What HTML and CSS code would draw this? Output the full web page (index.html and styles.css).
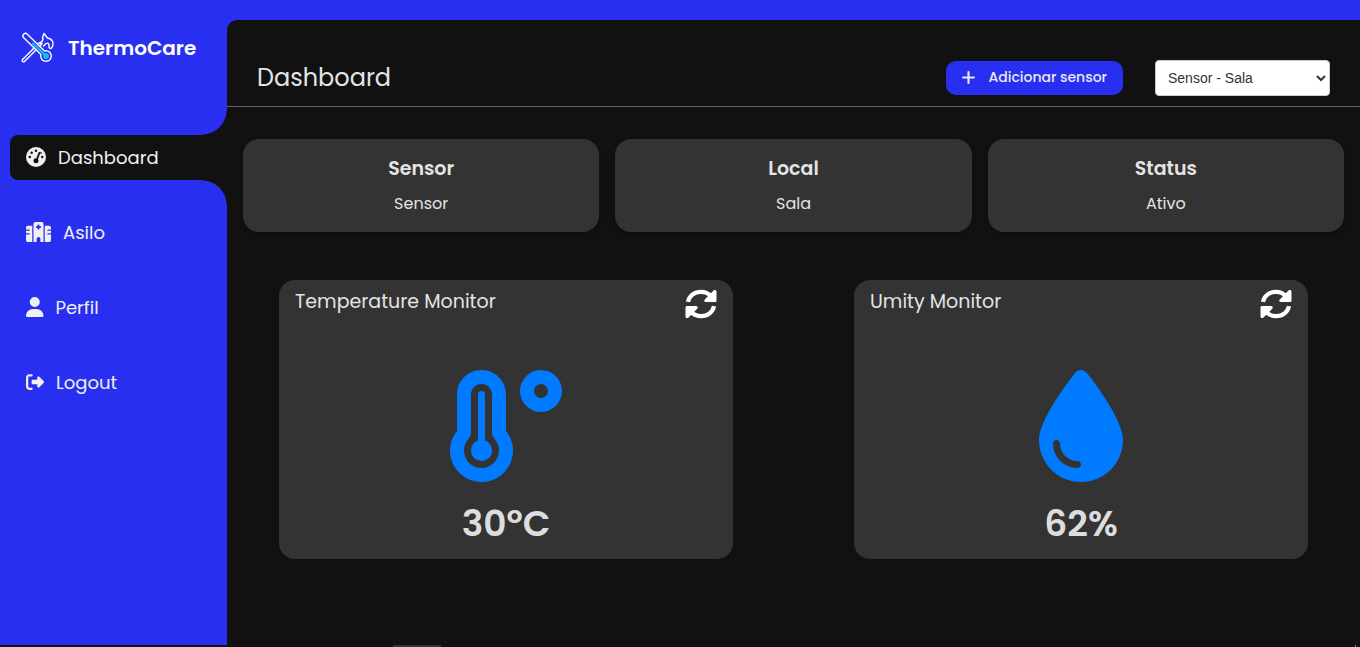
FILE: index.html
```html
<!DOCTYPE html>
<html lang="pt-BR">
<head>
<meta charset="utf-8">
<title>ThermoCare</title>
<link rel="stylesheet" href="styles.css">
</head>
<body>
<div class="layout">
  <aside class="sidebar">
    <a class="brand" href="#">
      <svg class="brand-logo" viewBox="0 0 36 36" fill="none" stroke-linecap="round" stroke-linejoin="round" aria-hidden="true">
        <path d="M3.500 30.500 20.500 13.500" stroke="#fff" stroke-width="4"/>
        <path d="M3.500 30.500 20.500 13.500" stroke="#292ff0" stroke-width="1.300"/>
        <path d="M20 14C22 11 24.500 10 22.500 7.500L24 3.500 27.500 8C32 8.500 35 13 31.500 18C30 19.500 28.500 17.500 29 15.500C29 12.500 26.500 12 23.500 16" stroke="#fff" stroke-width="1.400"/>
        <path d="M5.500 6 25.500 25.500" stroke="#fff" stroke-width="6.500"/>
        <circle cx="26" cy="26" r="6" fill="#fff"/>
        <path d="M5.500 6 25.500 25.500" stroke="#292ff0" stroke-width="3.800"/>
        <circle cx="26" cy="26" r="4.600" fill="#292ff0"/>
        <path d="M13 13.500 26 26" stroke="#12bdf7" stroke-width="2.400"/>
        <circle cx="26" cy="26" r="3" fill="#12bdf7"/>
      </svg>
      <span>ThermoCare</span>
    </a>
    <nav class="menu">
      <a class="menu-item active" href="#">
        <svg class="icon" viewBox="0 0 512 512" aria-hidden="true"><circle cx="256" cy="256" r="256" fill="currentColor"/><g fill="#111"><circle cx="256" cy="96" r="32"/><circle cx="144" cy="144" r="32"/><circle cx="96" cy="256" r="32"/><circle cx="416" cy="256" r="32"/><circle cx="256" cy="352" r="64"/><path d="M242 344 324 135c9-20 51-6 43 17L288 360z"/><path d="M380 120c22 8 31 27 20 46-9 13-28 13-38 2z"/></g></svg>
        <span>Dashboard</span>
      </a>
      <a class="menu-item" href="#">
        <svg class="icon" viewBox="0 0 640 512" fill="currentColor" aria-hidden="true"><path d="M192 48c0-26.500 21.500-48 48-48H400c26.500 0 48 21.500 48 48V512H368V432c0-26.500-21.500-48-48-48s-48 21.500-48 48v80H192V48zM48 96H160V512H48c-26.500 0-48-21.500-48-48V320H80c8.800 0 16-7.200 16-16s-7.200-16-16-16H0V224H80c8.800 0 16-7.200 16-16s-7.200-16-16-16H0V144c0-26.500 21.500-48 48-48zm544 0c26.500 0 48 21.500 48 48v48H560c-8.800 0-16 7.200-16 16s7.200 16 16 16h80v64H560c-8.800 0-16 7.200-16 16s7.200 16 16 16h80V464c0 26.500-21.500 48-48 48H480V96H592zM312 64c-8.800 0-16 7.200-16 16v24H272c-8.800 0-16 7.200-16 16v16c0 8.800 7.200 16 16 16h24v24c0 8.800 7.200 16 16 16h16c8.800 0 16-7.200 16-16V152h24c8.800 0 16-7.200 16-16V120c0-8.800-7.200-16-16-16H344V80c0-8.800-7.200-16-16-16H312z"/></svg>
        <span>Asilo</span>
      </a>
      <a class="menu-item" href="#">
        <svg class="icon" viewBox="0 0 448 512" fill="currentColor" aria-hidden="true"><path d="M224 256A128 128 0 1 0 224 0a128 128 0 1 0 0 256zm-45.700 48C79.800 304 0 383.800 0 482.300C0 498.700 13.300 512 29.700 512H418.300c16.400 0 29.700-13.300 29.700-29.700C448 383.800 368.200 304 269.700 304H178.300z"/></svg>
        <span>Perfil</span>
      </a>
      <a class="menu-item" href="#">
        <svg class="icon icon-small" viewBox="0 0 512 512" fill="currentColor" aria-hidden="true"><path d="M377.900 105.900L500.700 228.700c7.200 7.200 11.300 17.100 11.300 27.300s-4.100 20.100-11.300 27.300L377.900 406.100c-6.400 6.400-15 9.900-24 9.900c-18.700 0-33.900-15.200-33.900-33.900l0-62.100-128 0c-17.700 0-32-14.300-32-32l0-64c0-17.700 14.300-32 32-32l128 0 0-62.100c0-18.700 15.200-33.900 33.900-33.900c9 0 17.600 3.600 24 9.900zM160 96L96 96c-17.700 0-32 14.300-32 32l0 256c0 17.700 14.300 32 32 32l64 0c17.700 0 32 14.300 32 32s-14.300 32-32 32l-64 0c-53 0-96-43-96-96L0 128C0 75 43 32 96 32l64 0c17.700 0 32 14.300 32 32s-14.300 32-32 32z"/></svg>
        <span>Logout</span>
      </a>
    </nav>
  </aside>
  <main class="content">
    <header class="topbar">
      <h1>Dashboard</h1>
      <button class="add-button" type="button">
        <svg viewBox="0 0 12 12" stroke="currentColor" stroke-width="2" stroke-linecap="round" aria-hidden="true"><path d="M6 1v10M1 6h10"/></svg>
        <span>Adicionar sensor</span>
      </button>
      <select class="sensor-select" aria-label="Sensor"><option>Sensor - Sala</option></select>
    </header>
    <section class="summary">
      <article class="info-card"><h2>Sensor</h2><p>Sensor</p></article>
      <article class="info-card"><h2>Local</h2><p>Sala</p></article>
      <article class="info-card"><h2>Status</h2><p>Ativo</p></article>
    </section>
    <section class="monitors">
      <article class="monitor">
        <div class="monitor-head">
          <h2>Temperature Monitor</h2>
          <button class="refresh" type="button" aria-label="Atualizar temperatura"><svg viewBox="0 0 512 512" aria-hidden="true"><g id="refresh-arrow"><path d="M48 222C66 128 148 62 256 62c62 0 118 25 157 66" fill="none" stroke="currentColor" stroke-width="68"/><path d="M476 32c16 0 28 10 28 26v140c0 16-10 26-26 26H334c-26 0-34-26-18-42L456 40c6-6 12-8 20-8z" fill="currentColor"/></g><use href="#refresh-arrow" transform="rotate(180 256 256)"/></svg></button>
        </div>
        <svg class="monitor-icon" viewBox="0 0 512 512" fill="currentColor" fill-rule="evenodd" aria-hidden="true"><path d="M144 0C82 0 32 50 32 112v166.500C12 303 0 334 0 368c0 79.500 64.500 144 144 144s144-64.500 144-144c0-34-12-65-32-89.500V112C256 50 206 0 144 0zm0 448c-44.200 0-80-35.800-80-80 0-21 8-38 18-50 9-11 14-23 14-35V112c0-26.500 21.500-48 48-48s48 21.500 48 48v171c0 12 5 24 14 35 10 12 18 29 18 50 0 44.200-35.800 80-80 80z"/><path d="M128 112a16 16 0 0 1 32 0v210.700a48 48 0 1 1-32 0z"/><path d="M416 0a96 96 0 1 1 0 192 96 96 0 0 1 0-192zm0 64a32 32 0 1 0 0 64 32 32 0 0 0 0-64z"/></svg>
        <p class="reading">30ºC</p>
      </article>
      <article class="monitor">
        <div class="monitor-head">
          <h2>Umity Monitor</h2>
          <button class="refresh" type="button" aria-label="Atualizar umidade"><svg viewBox="0 0 512 512" aria-hidden="true"><use href="#refresh-arrow"/><use href="#refresh-arrow" transform="rotate(180 256 256)"/></svg></button>
        </div>
        <svg class="monitor-icon" viewBox="0 0 384 512" fill="currentColor" aria-hidden="true"><path d="M192 512C86 512 0 426 0 320C0 228.800 130.200 57.700 166.600 11.700C172.600 4.200 181.500 0 191.100 0h1.800c9.600 0 18.500 4.200 24.500 11.700C253.800 57.700 384 228.800 384 320c0 106-86 192-192 192zM96 336c0-8.800-7.200-16-16-16s-16 7.200-16 16c0 61.900 50.100 112 112 112c8.800 0 16-7.200 16-16s-7.200-16-16-16c-44.200 0-80-35.800-80-80z"/></svg>
        <p class="reading">62%</p>
      </article>
    </section>
  </main>
</div>
<div class="bottom-edge"><span class="edge-tab"></span><span class="edge-mark"></span></div>
</body>
</html>
```
FILE: styles.css
```css
* { box-sizing: border-box; margin: 0; padding: 0; }
body {
  background: #111;
  color: #e4e4e4;
  font-family: Poppins, Inter, sans-serif;
}
.layout {
  display: flex;
  min-height: calc(100vh - 2px);
  padding-top: 20px;
  background: #292ff0;
}
.sidebar { flex: 0 0 227px; }
.brand {
  display: flex;
  align-items: center;
  gap: 12px;
  height: 56px;
  padding-left: 20px;
  color: #fff;
  font-size: 20px;
  font-weight: 600;
  text-decoration: none;
}
.brand-logo { width: 36px; height: 36px; }
.menu {
  display: flex;
  flex-direction: column;
  gap: 30px;
  padding: 59px 0 0 10px;
}
.menu-item {
  position: relative;
  display: flex;
  align-items: center;
  gap: 12px;
  height: 45px;
  padding-left: 16px;
  border-radius: 8px 0 0 8px;
  color: #f0f0f0;
  font-size: 18px;
  text-decoration: none;
}
.icon { height: 20px; margin-bottom: 2px; }
.icon-small { height: 18px; }
.active { background: #111; }
/* Concave corners joining the active tab to the content panel */
.active::before,
.active::after {
  content: "";
  position: absolute;
  right: 0;
  width: 25px;
  height: 25px;
}
.active::before {
  bottom: 100%;
  background: radial-gradient(circle at 0 0, transparent 24px, #111 25px);
}
.active::after {
  top: 100%;
  background: radial-gradient(circle at 0 100%, transparent 24px, #111 25px);
}
.content {
  flex: 1;
  min-width: 0;
  background: #111;
  border-top-left-radius: 10px;
}
.topbar {
  display: flex;
  align-items: center;
  height: 87px;
  padding: 29px 30px 0;
  border-bottom: 1px solid #66666c;
}
.topbar h1 {
  margin-right: auto;
  font-size: 24px;
  font-weight: 400;
}
.add-button {
  display: flex;
  align-items: center;
  gap: 13px;
  height: 34px;
  margin-right: 32px;
  padding: 0 16px;
  border: 0;
  border-radius: 10px;
  background: #292ff0;
  color: #e8e8f8;
  font: 500 14px Poppins, Inter, sans-serif;
}
.add-button svg { width: 13px; height: 13px; }
.sensor-select {
  width: 175px;
  height: 36px;
  padding: 0 8px;
  border: 1px solid #ccc;
  border-radius: 4px;
  background: #fff;
  color: #333;
  font: 14px "Liberation Sans", Arial, sans-serif;
}
.summary {
  display: grid;
  grid-template-columns: repeat(3, 1fr);
  gap: 16px;
  padding: 32px 16px 0;
}
.info-card {
  padding: 16px;
  border-radius: 16px;
  background: #333;
  box-shadow: 0 2px 4px rgba(0, 0, 0, 0.2);
  text-align: center;
}
.info-card h2 { font-size: 19px; font-weight: 600; line-height: 28px; }
.info-card p { margin-top: 9px; font-size: 16px; line-height: 24px; }
.monitors {
  display: grid;
  grid-template-columns: 1fr 1fr;
  gap: 121px;
  padding: 48px 52px;
}
.monitor {
  display: flex;
  flex-direction: column;
  align-items: center;
  padding: 8px 16px;
  border-radius: 16px;
  background: #333;
}
.monitor-head {
  display: flex;
  align-self: stretch;
  justify-content: space-between;
}
.monitor-head h2 { font-size: 19px; font-weight: 400; line-height: 28px; }
.refresh { height: 32px; border: 0; background: none; color: #fff; }
.refresh svg { display: block; width: 32px; height: 32px; }
.monitor-icon { height: 112px; margin-top: 50px; color: #007bff; }
.reading { margin-top: 15px; font-size: 36px; font-weight: 600; line-height: 54px; color: #ddd; }
.bottom-edge {
  display: flex;
  justify-content: space-between;
  height: 2px;
  padding: 0 4px 0 393px;
}
.edge-tab { width: 48px; background: #333; }
.edge-mark { width: 1px; background: #888; }
```
